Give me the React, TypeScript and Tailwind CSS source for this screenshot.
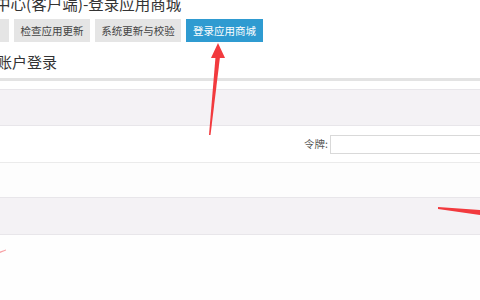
import React from 'react';

const font = { fontFamily: '"Noto Sans CJK SC", "Noto Sans", sans-serif' };

export default function App() {
  return (
    <div className="relative w-[480px] h-[300px] overflow-hidden bg-white text-[#333]" style={font}>
      {/* Title */}
      <div className="ml-[-5px] mt-[-7px] h-[20px] text-[15.5px] leading-[20px] text-[#333] whitespace-nowrap">
        中心(客户端)-登录应用商城
      </div>

      {/* Tabs */}
      <div className="mt-[6px] flex gap-[5px] ml-[-51px] h-[23px]">
        <button className="w-[60px] h-[23px] bg-[#e5e5e5] text-[10.5px] text-[#444] whitespace-nowrap">我的应用</button>
        <button className="w-[76px] h-[23px] bg-[#e5e5e5] text-[10.5px] text-[#444] whitespace-nowrap">检查应用更新</button>
        <button className="w-[86px] h-[23px] bg-[#e5e5e5] text-[10.5px] text-[#444] whitespace-nowrap">系统更新与校验</button>
        <button className="w-[77px] h-[23px] bg-[#2f9bd1] text-[10.5px] text-white whitespace-nowrap">登录应用商城</button>
      </div>

      {/* Section heading */}
      <div className="mt-[7px] ml-[-3px] h-[26px] text-[15px] leading-[26px] text-[#333]">账户登录</div>
      <div className="mt-[3px] h-[3px] bg-[#e3e3e3]" />
      <div className="h-[8px]" />

      {/* Form table */}
      <div className="flex flex-col">
        <div className="h-[37px] bg-[#f4f2f5] border-t border-b border-[#e8e6ea]" />
        <div className="h-[37px] bg-white border-b border-[#ebebeb] flex items-center justify-end">
          <span className="text-[10.5px] text-[#555] mr-[2px]">令牌:</span>
          <input className="w-[160px] mr-[-10px] h-[19px] border border-[#d9d9d9] bg-white outline-none" />
        </div>
        <div className="h-[34px] bg-[#fdfdfd]" />
        <div className="h-[38px] bg-[#f4f2f5] border-t border-b border-[#e8e6ea]" />
        <div className="h-[70px] bg-[#fefefe]" />
      </div>

      {/* Red annotation arrows */}
      <svg className="absolute inset-0 pointer-events-none" width="480" height="300" viewBox="0 0 480 300">
        <polygon points="209,135 210.5,135 220,57 215.5,57" fill="#f23a3e" />
        <polygon points="218,43 211,58 225,58" fill="#f23a3e" />
        <polygon points="438,207 480,210 480,215 438,209" fill="#f23a3e" />
        <polygon points="0,251.5 6,249.5 6,250.5 0,253" fill="#f8a0a4" />
      </svg>
    </div>
  );
}
